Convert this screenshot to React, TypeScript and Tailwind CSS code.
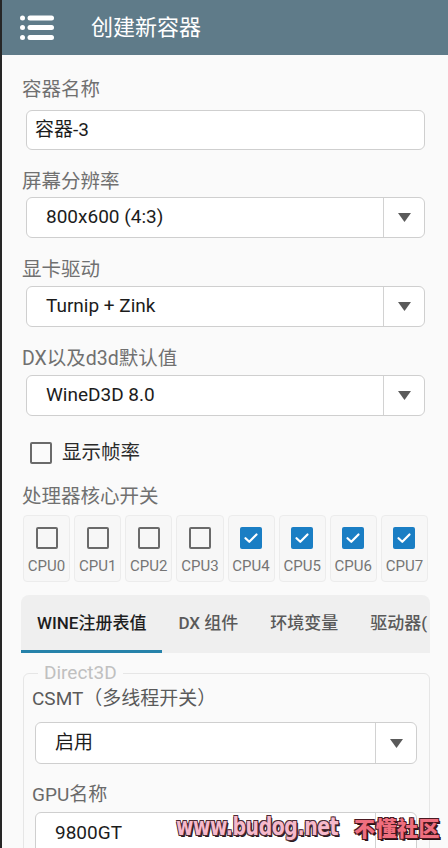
import React from 'react';

const cpus = [false, false, false, false, true, true, true, true];
const tabs = ['WINE注册表值', 'DX 组件', '环境变量', '驱动器('];

const Arrow = () => (
  <svg width="13" height="9" viewBox="0 0 13 9">
    <path d="M0 0 H13 L6.5 9 Z" fill="#5a5a5a" />
  </svg>
);

const Select: React.FC<{ value: string; className?: string }> = ({ value, className = '' }) => (
  <div className={`flex bg-white border-[1.5px] border-[#cfcfcf] rounded-[6px] ${className}`}>
    <div className="flex-1 flex items-center pl-[19px] text-[19px] text-[#1c1c1c] overflow-hidden whitespace-nowrap">{value}</div>
    <div className="w-[41px] border-l-[1.5px] border-[#d2d2d2] flex items-center justify-center">
      <Arrow />
    </div>
  </div>
);

const Box: React.FC<{ checked: boolean }> = ({ checked }) =>
  checked ? (
    <div className="w-[22px] h-[22px] rounded-[2px] bg-[#1a7ec4] flex items-center justify-center">
      <svg width="16" height="12" viewBox="0 0 16 12">
        <path d="M2.5 6.2 L6.3 9.8 L13.5 2.5" fill="none" stroke="#fff" strokeWidth="2.2" strokeLinecap="round" strokeLinejoin="round" />
      </svg>
    </div>
  ) : (
    <div className="w-[22px] h-[22px] rounded-[2px] border-[2.5px] border-[#6a6a6a]" />
  );

const Label: React.FC<{ text: string; className?: string }> = ({ text, className = '' }) => (
  <div className={`h-[26px] leading-[26px] text-[19.5px] text-[#707070] ${className}`}>{text}</div>
);

export default function App() {
  return (
    <div className="relative w-[448px] h-[848px] overflow-hidden bg-[#fafafa] border-l-2 border-[#262626] font-['Roboto','Noto_Sans_CJK_SC',sans-serif]">
      {/* Header */}
      <div className="h-[55px] bg-[#5f7b89] flex items-center">
        <svg className="ml-[18px]" width="34" height="26" viewBox="0 0 34 26">
          {[3, 12.5, 22.5].map((y) => (
            <g key={y}>
              <circle cx="2.5" cy={y} r="2.5" fill="#fff" />
              <line x1="10" y1={y} x2="31.5" y2={y} stroke="#fff" strokeWidth="5" strokeLinecap="round" />
            </g>
          ))}
        </svg>
        <span className="ml-[37px] text-[22px] text-white">创建新容器</span>
      </div>

      <div className="px-[20px]">
        <Label text="容器名称" className="mt-[22px] mb-[7px]" />
        <div className="ml-[4px] mr-[3px] h-[40px] bg-white border-[1.5px] border-[#cfcfcf] rounded-[6px] flex items-center pl-[8px] text-[19px] text-[#1c1c1c]">
          容器-3
        </div>

        <Label text="屏幕分辨率" className="mt-[19px] mb-[2px]" />
        <Select value="800x600 (4:3)" className="ml-[4px] mr-[3px] h-[41px]" />

        <Label text="显卡驱动" className="mt-[19px] mb-[3px]" />
        <Select value="Turnip + Zink" className="ml-[4px] mr-[3px] h-[41px]" />

        <Label text="DX以及d3d默认值" className="mt-[19px] mb-[3px]" />
        <Select value="WineD3D 8.0" className="ml-[4px] mr-[3px] h-[41px]" />

        <div className="mt-[24px] h-[26px] flex items-center pl-[8px]">
          <Box checked={false} />
          <span className="ml-[10px] text-[19.5px] text-[#2a2a2a]">显示帧率</span>
        </div>

        <Label text="处理器核心开关" className="mt-[18px] mb-[5px]" />
        <div className="ml-[1px] grid grid-cols-8 gap-[4px]">
          {cpus.map((on, i) => (
            <div key={i} className="h-[67px] bg-[#f7f7f7] border border-[#ececec] rounded-[4px] flex flex-col items-center pt-[11px]">
              <Box checked={on} />
              <span className="mt-[8px] text-[15px] leading-[18px] text-[#757575]">CPU{i}</span>
            </div>
          ))}
        </div>

        {/* Tabs */}
        <div className="mt-[13px] -ml-[1px] -mr-[2px] h-[58px] bg-[#efefef] rounded-t-[8px] flex overflow-hidden whitespace-nowrap">
          {tabs.map((t, i) => (
            <div
              key={t}
              className={`px-[16px] flex items-center text-[17px] font-medium ${i === 0 ? 'text-[#1e1e1e] border-b-[3px] border-[#2682aa] pt-[3px]' : 'text-[#5a5a5a]'}`}
            >
              {t}
            </div>
          ))}
        </div>

        <fieldset className="mt-[7px] ml-[1px] -mr-[2px] border border-[#e6e6e6] rounded-[6px] pl-[8px] pr-[12px] pb-[20px]">
          <legend className="ml-[6px] px-[6px] h-[26px] leading-[26px] text-[19px] text-[#c0c0c0]">Direct3D</legend>
          <div className="h-[26px] leading-[26px] text-[19px] text-[#5a5a5a]">CSMT（多线程开关）</div>
          <Select value="启用" className="mt-[10px] ml-[3px] h-[42px]" />
          <div className="mt-[18px] mb-[4px] h-[26px] leading-[26px] text-[19px] text-[#6a6a6a]">GPU名称</div>
          <Select value="9800GT" className="ml-[3px] h-[42px]" />
        </fieldset>
      </div>

      {/* watermark */}
      <span className="absolute left-[174px] top-[812px] origin-left scale-x-[0.84] whitespace-nowrap font-['DejaVu_Sans_Condensed',sans-serif] font-bold text-[25px] leading-[30px] tracking-[-0.5px] text-[#f6b9cb] [text-shadow:1px_1px_0_#4a2a33,-1px_-1px_0_#4a2a33,1px_-1px_0_#4a2a33,-1px_1px_0_#4a2a33,2px_2px_0_#2a1a1e]">
        www.budog.net
      </span>
      <span className="absolute left-[352px] top-[812px] whitespace-nowrap font-['Noto_Sans_CJK_SC',sans-serif] font-black text-[21px] leading-[30px] tracking-[0.5px] text-[#ef6f7f] [text-shadow:1px_1px_0_#4a1a22,-1px_-1px_0_#4a1a22,1px_-1px_0_#4a1a22,-1px_1px_0_#4a1a22,2px_2px_0_#2a1014]">
        不懂社区
      </span>
    </div>
  );
}
